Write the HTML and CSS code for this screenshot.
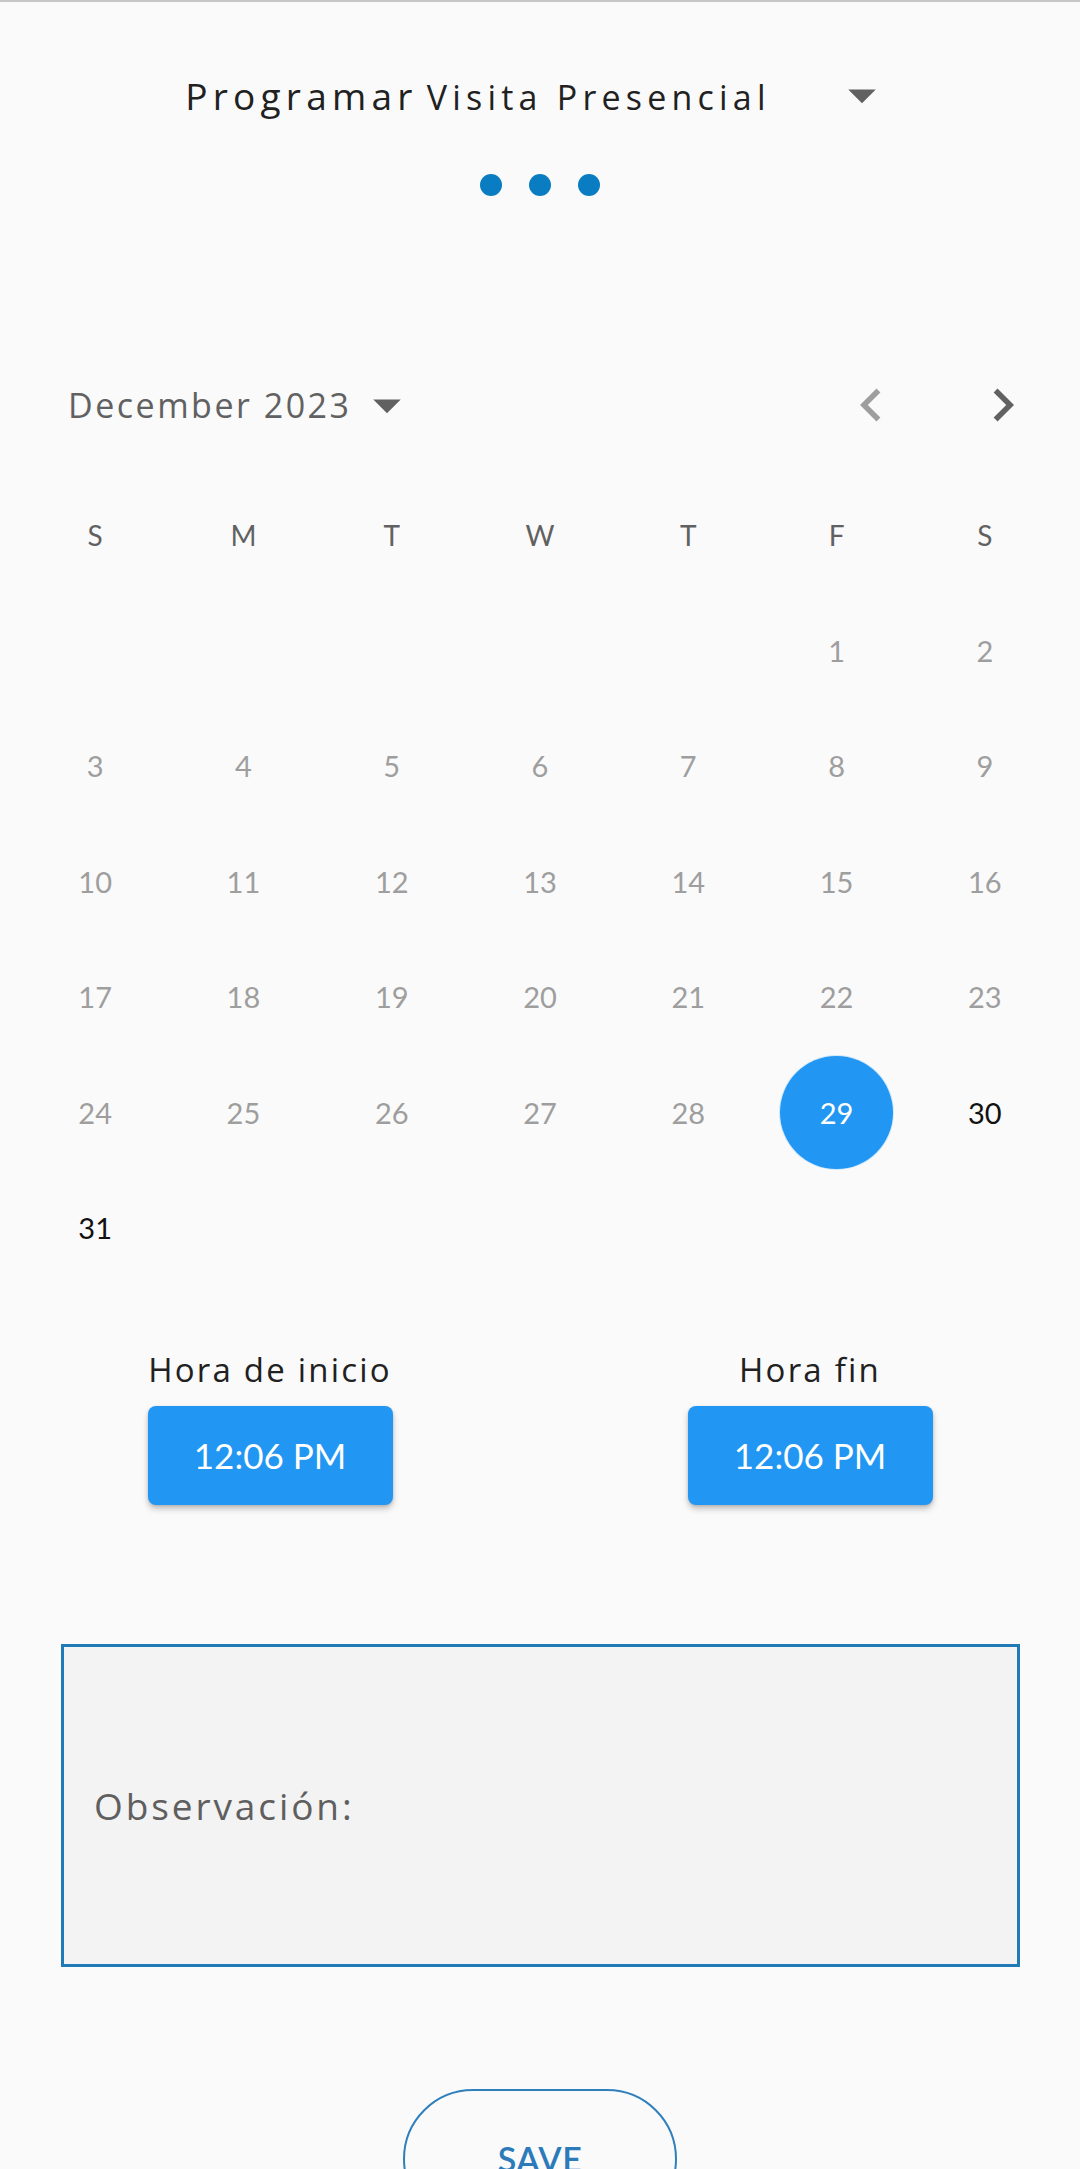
FILE: index.html
```html
<!DOCTYPE html>
<html lang="es">
<head>
<meta charset="utf-8">
<title>Programar Visita Presencial</title>
<link rel="stylesheet" href="styles.css">
</head>
<body>
<div class="page">
  <div class="title-row">
    <div class="title"><span class="title-a">Programar</span> <span class="title-b">Visita Presencial</span></div>
    <svg class="icon66 title-caret" viewBox="0 0 24 24"><path d="M7 10l5 5 5-5z" fill="#616161"/></svg>
  </div>
  <div class="dots"><span class="dot"></span><span class="dot"></span><span class="dot"></span></div>

  <div class="cal-header">
    <div class="month">
      <span class="month-label">December 2023</span>
      <svg class="icon66" viewBox="0 0 24 24"><path d="M7 10l5 5 5-5z" fill="#616161"/></svg>
    </div>
    <div class="nav">
      <svg class="icon66" viewBox="0 0 24 24"><path d="M15.41 7.41L14 6l-6 6 6 6 1.41-1.41L10.83 12z" fill="#9e9e9e"/></svg>
      <svg class="icon66" viewBox="0 0 24 24"><path d="M10 6L8.59 7.41 13.17 12l-4.58 4.59L10 18l6-6z" fill="#616161"/></svg>
    </div>
  </div>

  <div class="grid weekdays">
    <span>S</span><span>M</span><span>T</span><span>W</span><span>T</span><span>F</span><span>S</span>
  </div>
  <div class="grid days">
    <span></span><span></span><span></span><span></span><span></span>
    <span class="off">1</span><span class="off">2</span>
    <span class="off">3</span><span class="off">4</span><span class="off">5</span><span class="off">6</span><span class="off">7</span><span class="off">8</span><span class="off">9</span>
    <span class="off">10</span><span class="off">11</span><span class="off">12</span><span class="off">13</span><span class="off">14</span><span class="off">15</span><span class="off">16</span>
    <span class="off">17</span><span class="off">18</span><span class="off">19</span><span class="off">20</span><span class="off">21</span><span class="off">22</span><span class="off">23</span>
    <span class="off">24</span><span class="off">25</span><span class="off">26</span><span class="off">27</span><span class="off">28</span><span class="sel"><b>29</b></span><span class="on">30</span>
    <span class="on">31</span>
  </div>

  <div class="times">
    <div class="time-col">
      <div class="time-label">Hora de inicio</div>
      <button class="time-btn">12:06 PM</button>
    </div>
    <div class="time-col">
      <div class="time-label">Hora fin</div>
      <button class="time-btn">12:06 PM</button>
    </div>
  </div>

  <div class="obs">
    <span class="obs-label">Observación:</span>
  </div>

  <div class="save-row">
    <button class="save">SAVE</button>
  </div>
</div>
</body>
</html>
```

FILE: styles.css
```css
html, body {
  margin: 0;
  padding: 0;
  background: #fafafa;
}
body {
  width: 1080px;
  height: 2169px;
  overflow: hidden;
  font-family: "Lato", "Open Sans", sans-serif;
}
.page {
  border-top: 2px solid #c6c6c6;
  display: flex;
  flex-direction: column;
}
.icon66 {
  width: 66px;
  height: 66px;
  display: block;
  flex: none;
}
.title-row {
  margin-top: 60px;
  height: 66px;
  display: flex;
  align-items: center;
  justify-content: center;
  gap: 58px;
}
.title {
  font-family: "Open Sans", "Lato", sans-serif;
  color: #212121;
  letter-spacing: 5.2px;
  white-space: nowrap;
}
.title-a { font-size: 37px; }
.title-b { font-size: 34px; }
.dots {
  margin-top: 46px;
  height: 22px;
  display: flex;
  justify-content: center;
  gap: 27px;
}
.dot {
  width: 22px;
  height: 22px;
  border-radius: 50%;
  background: #0a7dc2;
}
.cal-header {
  margin-top: 176px;
  height: 66px;
  display: flex;
  align-items: center;
  justify-content: space-between;
  padding: 0 44px 0 68px;
}
.month {
  display: flex;
  align-items: center;
  gap: 2px;
}
.month-label {
  font-family: "Open Sans", "Lato", sans-serif;
  font-size: 34px;
  color: #616161;
  letter-spacing: 2.5px;
}
.nav {
  display: flex;
  gap: 66px;
}
.grid {
  display: grid;
  grid-template-columns: repeat(7, 1fr);
  grid-auto-rows: 115.5px;
  padding: 0 21px;
}
.grid span {
  display: flex;
  align-items: center;
  justify-content: center;
}
.weekdays {
  margin-top: 39px;
  font-size: 28px;
  color: #616161;
}
.days {
  font-size: 29px;
}
.days .off { color: #9e9e9e; }
.days .on { color: #111; }
.days .sel b {
  font-weight: normal;
  width: 113px;
  height: 113px;
  border-radius: 50%;
  background: #2196f3;
  color: #fff;
  display: flex;
  align-items: center;
  justify-content: center;
  box-shadow: 0 0 0 1px #cfe8fb;
}
.times {
  margin-top: 64px;
  display: flex;
}
.time-col {
  flex: 1;
  display: flex;
  flex-direction: column;
  align-items: center;
  gap: 16px;
}
.time-label {
  font-family: "Open Sans", "Lato", sans-serif;
  height: 40px;
  line-height: 40px;
  font-size: 33px;
  color: #212121;
  letter-spacing: 2.2px;
}
.time-btn {
  width: 245px;
  height: 99px;
  border: none;
  border-radius: 8px;
  background: #2196f3;
  color: #fff;
  font-family: inherit;
  font-size: 35px;
  box-shadow: 0 4px 6px rgba(0,0,0,0.22), 0 1px 3px rgba(0,0,0,0.12);
  padding: 0;
}
.obs {
  margin: 139px 60px 0 61px;
  height: 317px;
  border: 3px solid #1f7ab6;
  background: #f3f3f3;
  display: flex;
  align-items: center;
  padding-left: 30px;
}
.obs-label {
  font-family: "Open Sans", "Lato", sans-serif;
  font-size: 37px;
  color: #5f5f5f;
  letter-spacing: 2.9px;
}
.save-row {
  margin-top: 122px;
  display: flex;
  justify-content: center;
}
.save {
  width: 274px;
  height: 140px;
  border: 2.5px solid #2f7fbc;
  border-radius: 70px;
  background: transparent;
  color: #2b7bba;
  font-family: inherit;
  font-size: 34px;
  font-weight: 600;
  letter-spacing: 0.5px;
  padding: 0;
}
```
